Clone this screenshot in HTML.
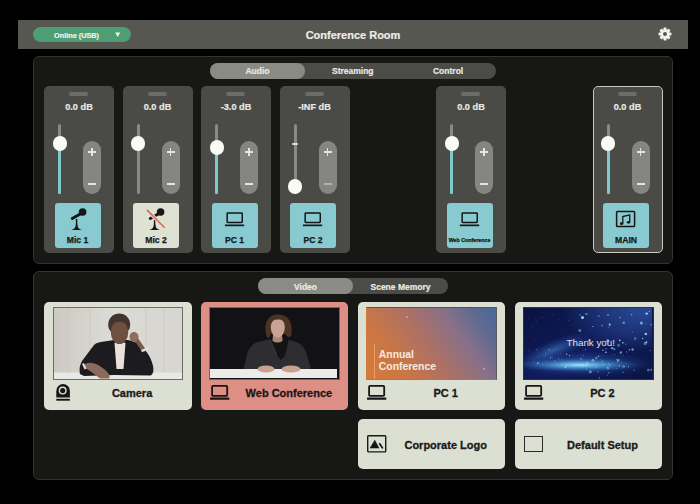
<!DOCTYPE html>
<html><head><meta charset="utf-8">
<style>
*{box-sizing:border-box;margin:0;padding:0}
html,body{width:700px;height:504px;background:#000;overflow:hidden;font-family:"Liberation Sans",sans-serif;font-weight:bold}
.a{position:absolute}
.panel{background:#171715;border:1px solid #343431;border-radius:6px}
.tabs{border-radius:8px;background:#4b4b47}
.tab{top:0;text-align:center;color:#e9e9e3;font-size:8.5px;width:95px;-webkit-text-stroke:.2px #e9e9e3}
.tab.on{background:#8b8b86;border-radius:8px}
.strip{top:86px;width:70px;height:167px;background:#4a4a46;border-radius:5px}
.ind{left:25px;top:6px;width:19px;height:4px;border-radius:2px;background:#6c6c68}
.db{left:0;top:15px;width:70px;text-align:center;color:#e9e9e3;font-size:9.2px;line-height:12px;-webkit-text-stroke:.2px #e9e9e3}
.trk{left:14px;top:37.5px;width:3px;height:70.5px;background:#8a8a85;border-radius:1.5px}
.teal{background:#7fc8cb}
.knob{left:8.5px;width:14.4px;height:14.4px;border-radius:50%;background:#fbfbf6}
.pm{left:39px;top:55px;width:18px;height:53px;border-radius:9px;background:#858581}
.btn{left:10.5px;top:116.5px;width:46px;height:45px;border-radius:3px;background:#88cad0}
.lbl{left:0;top:32px;width:46px;text-align:center;color:#181818;font-size:8.6px;line-height:11px;white-space:nowrap;-webkit-text-stroke:.25px #181818}
.card{width:147.5px;height:107.5px;border-radius:5px;background:#dbe0d2}
.card .img{left:8.5px;top:5px;width:130.5px;height:72.7px;overflow:hidden;border:1px solid #555}
.clbl{color:#1a1a1a;font-size:11px;line-height:14px;white-space:nowrap;-webkit-text-stroke:.3px #1a1a1a}
</style></head><body>

<div class="a" style="left:18px;top:20px;width:670px;height:29px;background:#575752"></div>
<div class="a" style="left:18px;top:20px;width:670px;height:29px;line-height:30px;text-align:center;color:#ecece6;font-size:11px;-webkit-text-stroke:.2px #ecece6">Conference Room</div>
<div class="a" style="left:33px;top:27px;width:98px;height:15px;border-radius:8px;background:#4f9d72;color:#eef3ee;font-size:7.3px;line-height:15px"><span class="a" style="left:21px;top:0.8px;-webkit-text-stroke:.2px #eef3ee">Online (USB)</span><svg class="a" style="left:81.6px;top:5px" width="6" height="6" viewBox="0 0 6 6"><path d="M0.2 0.5 H5.2 L2.7 5Z" fill="#eef3ee"/></svg></div>
<svg class="a" style="left:657.3px;top:26.4px" width="16" height="16" viewBox="-8.5 -8.5 17 17"><g fill="#f2f2ec"><rect x="-1.7" y="-6.8" width="3.4" height="3.6" rx=".9" transform="rotate(0)"/><rect x="-1.7" y="-6.8" width="3.4" height="3.6" rx=".9" transform="rotate(45)"/><rect x="-1.7" y="-6.8" width="3.4" height="3.6" rx=".9" transform="rotate(90)"/><rect x="-1.7" y="-6.8" width="3.4" height="3.6" rx=".9" transform="rotate(135)"/><rect x="-1.7" y="-6.8" width="3.4" height="3.6" rx=".9" transform="rotate(180)"/><rect x="-1.7" y="-6.8" width="3.4" height="3.6" rx=".9" transform="rotate(225)"/><rect x="-1.7" y="-6.8" width="3.4" height="3.6" rx=".9" transform="rotate(270)"/><rect x="-1.7" y="-6.8" width="3.4" height="3.6" rx=".9" transform="rotate(315)"/><circle r="4.6"/></g><circle r="2.1" fill="#575752"/></svg>
<div class="a panel" style="left:33px;top:56px;width:640px;height:208px"></div>
<div class="a tabs" style="left:210px;top:63px;width:286px;height:15.5px">
<div class="a tab on" style="left:0.0px;height:15.5px;line-height:17px">Audio</div>
<div class="a tab" style="left:95.3px;height:15.5px;line-height:17px">Streaming</div>
<div class="a tab" style="left:190.6px;height:15.5px;line-height:17px">Control</div>
</div>
<div class="a strip" style="left:44px"><div class="a" style="left:0px;top:0px;width:70px;height:167px"><div class="a ind"></div><div class="a db">0.0 dB</div><div class="a trk"></div><div class="a trk teal" style="top:57.5px;height:50.5px"></div><div class="a knob" style="top:50.3px"></div><div class="a pm"><div class="a" style="left:5px;top:10px;width:8px;height:1.5px;background:#e6e6e0"></div><div class="a" style="left:8.25px;top:6.75px;width:1.5px;height:8px;background:#e6e6e0"></div><div class="a" style="left:5px;top:42px;width:8px;height:1.5px;background:#e6e6e0"></div></div><div class="a btn" style="background:#88cad0"><svg class="a" style="left:0;top:0" width="46" height="30" viewBox="0 0 46 30"><circle cx="27.6" cy="9" r="3.8" fill="#161616"/><path d="M25.2 11 L17.3 15.5" stroke="#161616" stroke-width="3" stroke-linecap="round"/><path d="M21.6 16 V24" stroke="#161616" stroke-width="1.5"/><path d="M16.2 26.9 C19.5 26.4 20.8 24.4 20.9 21.5 L22.3 21.5 C22.4 24.4 23.7 26.4 27 26.9 Z" fill="#161616"/></svg><div class="a lbl">Mic 1</div></div></div></div>
<div class="a strip" style="left:122.5px"><div class="a" style="left:0px;top:0px;width:70px;height:167px"><div class="a ind"></div><div class="a db">0.0 dB</div><div class="a trk"></div><div class="a knob" style="top:50.3px"></div><div class="a pm"><div class="a" style="left:5px;top:10px;width:8px;height:1.5px;background:#e6e6e0"></div><div class="a" style="left:8.25px;top:6.75px;width:1.5px;height:8px;background:#e6e6e0"></div><div class="a" style="left:5px;top:42px;width:8px;height:1.5px;background:#e6e6e0"></div></div><div class="a btn" style="background:#dee2d3"><svg class="a" style="left:0;top:0" width="46" height="30" viewBox="0 0 46 30"><circle cx="27.6" cy="9" r="3.8" fill="#161616"/><path d="M25.2 11 L17.3 15.5" stroke="#161616" stroke-width="3" stroke-linecap="round"/><path d="M21.6 16 V24" stroke="#161616" stroke-width="1.5"/><path d="M16.2 26.9 C19.5 26.4 20.8 24.4 20.9 21.5 L22.3 21.5 C22.4 24.4 23.7 26.4 27 26.9 Z" fill="#161616"/><path d="M13.9 6.9 L31.7 24.8" stroke="#dee2d3" stroke-width="3.6"/><path d="M13.9 6.9 L31.7 24.8" stroke="#e0605a" stroke-width="1.5"/></svg><div class="a lbl">Mic 2</div></div></div></div>
<div class="a strip" style="left:201px"><div class="a" style="left:0px;top:0px;width:70px;height:167px"><div class="a ind"></div><div class="a db">-3.0 dB</div><div class="a trk"></div><div class="a trk teal" style="top:61.5px;height:46.5px"></div><div class="a knob" style="top:54.3px"></div><div class="a pm"><div class="a" style="left:5px;top:10px;width:8px;height:1.5px;background:#e6e6e0"></div><div class="a" style="left:8.25px;top:6.75px;width:1.5px;height:8px;background:#e6e6e0"></div><div class="a" style="left:5px;top:42px;width:8px;height:1.5px;background:#e6e6e0"></div></div><div class="a btn" style="background:#88cad0"><svg class="a" style="left:0;top:0" width="46" height="30" viewBox="0 0 46 30"><rect x="15.15" y="10.1" width="15.1" height="9.3" rx=".7" fill="none" stroke="#161616" stroke-width="1.5"/><rect x="12.9" y="21.5" width="19.3" height="1.7" fill="#161616"/></svg><div class="a lbl">PC 1</div></div></div></div>
<div class="a strip" style="left:279.5px"><div class="a" style="left:0px;top:0px;width:70px;height:167px"><div class="a ind"></div><div class="a db">-INF dB</div><div class="a trk"></div><div class="a" style="left:12.5px;top:57px;width:6px;height:2px;background:#e0e0da;border-radius:1px"></div><div class="a knob" style="top:93.3px"></div><div class="a pm"><div class="a" style="left:5px;top:10px;width:8px;height:1.5px;background:#e6e6e0"></div><div class="a" style="left:8.25px;top:6.75px;width:1.5px;height:8px;background:#e6e6e0"></div><div class="a" style="left:5px;top:42px;width:8px;height:1.5px;background:#e6e6e0;opacity:.45"></div></div><div class="a btn" style="background:#88cad0"><svg class="a" style="left:0;top:0" width="46" height="30" viewBox="0 0 46 30"><rect x="15.15" y="10.1" width="15.1" height="9.3" rx=".7" fill="none" stroke="#161616" stroke-width="1.5"/><rect x="12.9" y="21.5" width="19.3" height="1.7" fill="#161616"/></svg><div class="a lbl">PC 2</div></div></div></div>
<div class="a strip" style="left:436px"><div class="a" style="left:0px;top:0px;width:70px;height:167px"><div class="a ind"></div><div class="a db">0.0 dB</div><div class="a trk"></div><div class="a trk teal" style="top:57.5px;height:50.5px"></div><div class="a knob" style="top:50.3px"></div><div class="a pm"><div class="a" style="left:5px;top:10px;width:8px;height:1.5px;background:#e6e6e0"></div><div class="a" style="left:8.25px;top:6.75px;width:1.5px;height:8px;background:#e6e6e0"></div><div class="a" style="left:5px;top:42px;width:8px;height:1.5px;background:#e6e6e0"></div></div><div class="a btn" style="background:#88cad0"><svg class="a" style="left:0;top:0" width="46" height="30" viewBox="0 0 46 30"><rect x="15.15" y="10.1" width="15.1" height="9.3" rx=".7" fill="none" stroke="#161616" stroke-width="1.5"/><rect x="12.9" y="21.5" width="19.3" height="1.7" fill="#161616"/></svg><div class="a lbl" style="font-size:5.3px;top:32px;left:-1px;width:48px">Web Conference</div></div></div></div>
<div class="a strip" style="left:592.5px;border:1px solid #c9c9c1"><div class="a" style="left:-1px;top:-1px;width:70px;height:167px"><div class="a ind"></div><div class="a db">0.0 dB</div><div class="a trk"></div><div class="a trk teal" style="top:57.5px;height:50.5px"></div><div class="a knob" style="top:50.3px"></div><div class="a pm"><div class="a" style="left:5px;top:10px;width:8px;height:1.5px;background:#e6e6e0"></div><div class="a" style="left:8.25px;top:6.75px;width:1.5px;height:8px;background:#e6e6e0"></div><div class="a" style="left:5px;top:42px;width:8px;height:1.5px;background:#e6e6e0"></div></div><div class="a btn" style="background:#88cad0"><svg class="a" style="left:0;top:0" width="46" height="30" viewBox="0 0 46 30"><rect x="13.6" y="8.6" width="18" height="15" rx=".8" fill="none" stroke="#161616" stroke-width="1.5"/><path d="M19.8 20.5 V13.6 L26.7 11.8 V19" fill="none" stroke="#161616" stroke-width="1.3"/><ellipse cx="18.6" cy="20.7" rx="1.7" ry="1.4" fill="#161616"/><ellipse cx="25.5" cy="19.3" rx="1.7" ry="1.4" fill="#161616"/></svg><div class="a lbl">MAIN</div></div></div></div>
<div class="a panel" style="left:33px;top:271px;width:640px;height:209px"></div>
<div class="a tabs" style="left:258px;top:278px;width:190px;height:16px">
<div class="a tab on" style="left:0px;height:16px;line-height:18.5px">Video</div>
<div class="a tab" style="left:95px;height:16px;line-height:18.5px">Scene Memory</div>
</div>
<div class="a card" style="left:44.1px;top:302px">
  <div class="a img" style="border-color:#6d6d68;background:#cdcac4">
    <svg class="a" style="left:0;top:0" width="128" height="71" viewBox="0 0 128 71">
      <defs><linearGradient id="wood" x1="0" x2="1"><stop offset="0" stop-color="#cdcac4"/><stop offset=".45" stop-color="#dddbd5"/><stop offset="1" stop-color="#d7d5cf"/></linearGradient></defs>
      <rect width="128" height="71" fill="url(#wood)"/>
      <g stroke="#c0bcb6" stroke-width=".7" opacity=".6"><path d="M14 0V64M36 0V64M92 0V64M110 0V64"/></g>
      <rect y="64.5" width="128" height="7" fill="#e9e8e4"/>
      <path d="M26 66 C25 60 26 57 28 53 L40 37 C42 35 44 34.5 47 34 L60 32 L74 32 C78 33 82 34 85 36 L90 41 C94 45 98 52 99 58 C100 63 99 67 96 67.5 L60 67 L30 68 Z" fill="#1b1b20"/>
      <path d="M60.5 35 L65.5 33 L71.5 35 L69.5 61 L62.5 61 Z" fill="#ebe1da"/>
      <ellipse cx="65.2" cy="16.5" rx="11" ry="11" fill="#433530"/>
      <ellipse cx="65.5" cy="24.5" rx="8.7" ry="11.5" fill="#6e5040"/>
      <path d="M55.5 19 C56 11 60 8 65.5 8 C71 8 75 11 75.5 19 C73 15 70 14 65.5 14 C61 14 58 15 55.5 19 Z" fill="#433530"/>
      <path d="M89.5 42 L82 31" stroke="#7a5c4c" stroke-width="4.2" stroke-linecap="round"/>
      <ellipse cx="80" cy="29" rx="4.5" ry="5" fill="#8c6e5e"/>
      <path d="M87.5 43 L93.5 40.5" stroke="#e9e4de" stroke-width="2"/>
      <path d="M31 56 C37 53 44 56 50 61 C54 64 57 68 55 70.5 L46 70.5 C40 66 35 62 31 60 Z" fill="#8a6a5a"/><path d="M29 55.5 L31.5 61" stroke="#e8e2dc" stroke-width="2"/>
    </svg>
  </div>
  <svg class="a" style="left:12px;top:82px" width="15" height="18" viewBox="0 0 15 18"><path d="M0.3 13.4 V6.9 A6.8 6.8 0 0 1 13.9 6.9 V13.4Z" fill="#161616"/><circle cx="6.7" cy="6.6" r="3.3" fill="none" stroke="#dbe0d2" stroke-width="1.4"/><rect x="0.3" y="14.8" width="13.6" height="1.9" fill="#161616"/></svg>
  <div class="a clbl" style="left:28px;top:83.6px;width:120px;text-align:center">Camera</div>
</div>
<div class="a card" style="left:200.9px;top:302px;background:#dd8e85">
  <div class="a img" style="border:1.8px solid #dc3a28;background:#111115">
    <svg class="a" style="left:0;top:0" width="127" height="70" viewBox="0 0 127 70">
      <rect width="127" height="70" fill="#111116"/>
      <rect y="61" width="127" height="10" fill="#ebebea"/>
      <path d="M33.5 61 L37 46.5 C39 39.5 43 35.5 48 34 L61 31 L77 31 L86 34 C91 35.5 94.5 39.5 96.5 45.5 L101 61 Z" fill="#2e2e32"/><path d="M61.5 31.5 L67 48 M77.5 31.5 L72 48" stroke="#47474c" stroke-width="1.1"/>
      <path d="M60 30 L66 44 L71 38 L76 44 L79 30 Z" fill="#151517"/>
      <path d="M62 30 L67 48 L71 52 L75 48 L78 30 Q71 36 62 30 Z" fill="#141416"/>
      <path d="M63 26 L72 26 L72.5 33 Q67.5 36 62.5 33 Z" fill="#b08575"/>
      <path d="M57 29 C53 17 57 6.5 68 6.5 C79 6.5 83 15 81.5 27 C80 30 77 30 75.5 26 L60.5 26 C60 30 58 31 57 29 Z" fill="#4e3222"/>
      <ellipse cx="67.8" cy="19.5" rx="7" ry="9.8" fill="#c8a292"/>
      <path d="M60 16 C60 9 63.5 8.5 68 8.5 C72.5 8.5 76 10 75.5 16 C73.5 12 70.5 11.5 67.5 11.5 C64 11.5 61.5 13 60 16 Z" fill="#4e3222"/>
      <ellipse cx="56" cy="61" rx="8.5" ry="3.6" fill="#c9a191"/>
      <ellipse cx="81" cy="61" rx="9.5" ry="3.6" fill="#c9a191"/>
    </svg>
  </div>
  <svg class="a" style="left:9px;top:83px" width="20" height="16" viewBox="0 0 20 16"><rect x="2.1" y="0.9" width="15.1" height="9.9" rx=".9" fill="none" stroke="#1c1414" stroke-width="1.8"/><rect x="0" y="12.6" width="19.3" height="2.1" rx=".5" fill="#1c1414"/></svg>
  <div class="a clbl" style="left:28px;top:83.6px;width:120px;text-align:center;color:#1c1414">Web Conference</div>
</div>
<div class="a card" style="left:357.7px;top:302px">
  <div class="a img" style="border-color:#5a5050 #5a5a60 #c07040 #d07a40;background:linear-gradient(55deg,#d97a36 0%,#c97646 25%,#a97068 50%,#86708a 70%,#5e6a90 86%,#48689a 100%)">
    <div class="a" style="left:6.8px;top:36px;width:1px;height:38px;background:#e6a676;opacity:.85"></div>
    <div class="a" style="left:11.6px;top:41px;color:#f3ebe3;font-size:10.4px;line-height:12px;white-space:nowrap">Annual<br>Conference</div>
    <div class="a" style="left:39px;top:8px;width:2px;height:2px;border-radius:50%;background:#f0c0a0;opacity:.6"></div>
    <div class="a" style="left:116px;top:60px;width:2px;height:2px;border-radius:50%;background:#f0c0c0;opacity:.6"></div>
  </div>
  <svg class="a" style="left:9px;top:83px" width="20" height="16" viewBox="0 0 20 16"><rect x="2.1" y="0.9" width="15.1" height="9.9" rx=".9" fill="none" stroke="#161616" stroke-width="1.8"/><rect x="0" y="12.6" width="19.3" height="2.1" rx=".5" fill="#161616"/></svg>
  <div class="a clbl" style="left:28px;top:83.6px;width:120px;text-align:center">PC 1</div>
</div>
<div class="a card" style="left:514.5px;top:302px">
  <div class="a img" style="border-color:#2a3050;background:#0c1648">
    <svg class="a" style="left:0;top:0" width="128" height="71" viewBox="0 0 128 71">
      <defs>
        <linearGradient id="bg2" x1="0" y1="0" x2="1" y2="1"><stop offset="0" stop-color="#0a1240"/><stop offset=".55" stop-color="#101c5c"/><stop offset="1" stop-color="#0a1442"/></linearGradient>
        <radialGradient id="beam" cx=".9" cy="0" r=".6"><stop offset="0" stop-color="#3a68c0" stop-opacity=".6"/><stop offset="1" stop-color="#4878d0" stop-opacity="0"/></radialGradient>
        <radialGradient id="band" cx=".5" cy=".5" r=".5"><stop offset="0" stop-color="#a0e8ff" stop-opacity="1"/><stop offset=".45" stop-color="#5ab0e8" stop-opacity=".6"/><stop offset="1" stop-color="#2a60c0" stop-opacity="0"/></radialGradient>
        <radialGradient id="band2" cx=".5" cy=".5" r=".5"><stop offset="0" stop-color="#4a98e0" stop-opacity=".55"/><stop offset="1" stop-color="#2a60c0" stop-opacity="0"/></radialGradient>
      </defs>
      <rect width="128" height="71" fill="url(#bg2)"/>
      <rect width="128" height="71" fill="url(#beam)"/>
      <ellipse cx="30" cy="42" rx="40" ry="10" fill="url(#band2)" transform="rotate(-22 30 42)"/>
      <ellipse cx="60" cy="56" rx="72" ry="13" fill="url(#band2)"/>
      <ellipse cx="55" cy="57" rx="64" ry="7" fill="url(#band)"/>
      <circle cx="88.0" cy="40.1" r="1.2" fill="#a8e4fa" opacity="0.62"/><circle cx="117.4" cy="14.9" r="1.5" fill="#a8e4fa" opacity="0.64"/><circle cx="99.8" cy="14.7" r="1.2" fill="#a8e4fa" opacity="0.53"/><circle cx="61.6" cy="57.1" r="0.6" fill="#a8e4fa" opacity="0.71"/><circle cx="83.9" cy="32.8" r="1.5" fill="#a8e4fa" opacity="0.74"/><circle cx="100.5" cy="58.6" r="0.6" fill="#a8e4fa" opacity="0.39"/><circle cx="68.9" cy="18.5" r="0.6" fill="#a8e4fa" opacity="0.82"/><circle cx="78.8" cy="42.2" r="0.8" fill="#a8e4fa" opacity="0.66"/><circle cx="101.7" cy="36.0" r="0.6" fill="#a8e4fa" opacity="0.62"/><circle cx="75.3" cy="69.8" r="0.6" fill="#a8e4fa" opacity="0.77"/><circle cx="78.0" cy="17.6" r="1.0" fill="#a8e4fa" opacity="0.37"/><circle cx="96.1" cy="9.3" r="0.6" fill="#a8e4fa" opacity="0.86"/><circle cx="83.2" cy="67.1" r="0.6" fill="#a8e4fa" opacity="0.48"/><circle cx="122.7" cy="5.6" r="1.2" fill="#a8e4fa" opacity="0.94"/><circle cx="84.0" cy="7.0" r="0.8" fill="#a8e4fa" opacity="0.82"/><circle cx="74.7" cy="7.9" r="1.0" fill="#a8e4fa" opacity="0.36"/><circle cx="84.9" cy="64.8" r="0.8" fill="#a8e4fa" opacity="0.50"/><circle cx="62.4" cy="6.1" r="1.2" fill="#a8e4fa" opacity="0.46"/><circle cx="95.8" cy="32.4" r="0.8" fill="#a8e4fa" opacity="0.94"/><circle cx="111.2" cy="30.5" r="1.2" fill="#a8e4fa" opacity="0.42"/><circle cx="85.7" cy="16.5" r="1.0" fill="#a8e4fa" opacity="0.87"/><circle cx="126.2" cy="42.3" r="0.6" fill="#a8e4fa" opacity="0.48"/><circle cx="83.8" cy="60.1" r="1.5" fill="#a8e4fa" opacity="0.41"/><circle cx="127.2" cy="16.5" r="1.0" fill="#a8e4fa" opacity="0.36"/><circle cx="99.6" cy="58.5" r="1.2" fill="#a8e4fa" opacity="0.39"/><circle cx="61.6" cy="41.6" r="0.8" fill="#a8e4fa" opacity="0.36"/><circle cx="81.9" cy="44.3" r="0.8" fill="#a8e4fa" opacity="0.93"/><circle cx="90.3" cy="41.1" r="1.2" fill="#a8e4fa" opacity="0.46"/><circle cx="66.3" cy="63.8" r="1.5" fill="#a8e4fa" opacity="0.50"/><circle cx="68.9" cy="52.3" r="1.5" fill="#a8e4fa" opacity="0.47"/><circle cx="124.4" cy="62.0" r="1.5" fill="#a8e4fa" opacity="0.40"/><circle cx="58.5" cy="9.4" r="1.5" fill="#a8e4fa" opacity="0.93"/><circle cx="72.4" cy="49.9" r="1.0" fill="#a8e4fa" opacity="0.60"/><circle cx="121.1" cy="35.4" r="1.5" fill="#a8e4fa" opacity="0.46"/><circle cx="107.6" cy="6.7" r="0.8" fill="#a8e4fa" opacity="0.64"/><circle cx="102.7" cy="43.9" r="0.6" fill="#a8e4fa" opacity="0.52"/><circle cx="122.0" cy="15.9" r="0.6" fill="#a8e4fa" opacity="0.39"/><circle cx="85.0" cy="18.9" r="0.6" fill="#a8e4fa" opacity="0.46"/><circle cx="81.9" cy="40.9" r="0.8" fill="#a8e4fa" opacity="0.41"/><circle cx="65.1" cy="32.6" r="1.0" fill="#a8e4fa" opacity="0.74"/><circle cx="105.5" cy="41.7" r="0.8" fill="#a8e4fa" opacity="0.70"/><circle cx="122.4" cy="34.3" r="1.0" fill="#a8e4fa" opacity="0.77"/><circle cx="125.3" cy="3.4" r="0.6" fill="#a8e4fa" opacity="0.64"/><circle cx="108.3" cy="23.7" r="0.6" fill="#a8e4fa" opacity="0.40"/><circle cx="94.9" cy="52.1" r="0.8" fill="#a8e4fa" opacity="0.83"/><circle cx="121.8" cy="25.9" r="1.2" fill="#a8e4fa" opacity="0.89"/><circle cx="118.6" cy="30.4" r="0.6" fill="#a8e4fa" opacity="0.87"/><circle cx="96.8" cy="44.5" r="1.2" fill="#a8e4fa" opacity="0.58"/><circle cx="55.9" cy="6.9" r="0.6" fill="#a8e4fa" opacity="0.73"/><circle cx="127.5" cy="61.8" r="1.0" fill="#a8e4fa" opacity="0.58"/><circle cx="108.7" cy="41.5" r="1.2" fill="#a8e4fa" opacity="0.63"/><circle cx="94.5" cy="37.3" r="1.5" fill="#a8e4fa" opacity="0.37"/><circle cx="98.9" cy="34.7" r="0.8" fill="#a8e4fa" opacity="0.92"/><circle cx="63.2" cy="55.0" r="1.2" fill="#a8e4fa" opacity="0.50"/><circle cx="55.8" cy="22.5" r="1.5" fill="#a8e4fa" opacity="0.47"/><circle cx="18.7" cy="56.2" r="0.5" fill="#c0f0ff" opacity="0.55"/><circle cx="26.6" cy="49.2" r="0.5" fill="#c0f0ff" opacity="0.63"/><circle cx="21.8" cy="45.2" r="0.4" fill="#c0f0ff" opacity="0.74"/><circle cx="42.3" cy="57.9" r="0.7" fill="#c0f0ff" opacity="0.76"/><circle cx="23.1" cy="54.4" r="0.4" fill="#c0f0ff" opacity="0.66"/><circle cx="104.5" cy="58.8" r="0.5" fill="#c0f0ff" opacity="0.71"/><circle cx="12.4" cy="41.4" r="0.5" fill="#c0f0ff" opacity="0.49"/><circle cx="57.2" cy="57.6" r="0.7" fill="#c0f0ff" opacity="0.46"/><circle cx="92.3" cy="60.4" r="0.4" fill="#c0f0ff" opacity="0.71"/><circle cx="30.6" cy="52.6" r="0.7" fill="#c0f0ff" opacity="0.32"/><circle cx="77.9" cy="52.9" r="0.7" fill="#c0f0ff" opacity="0.31"/><circle cx="14.9" cy="49.3" r="0.5" fill="#c0f0ff" opacity="0.39"/><circle cx="84.6" cy="55.3" r="0.4" fill="#c0f0ff" opacity="0.79"/><circle cx="12.7" cy="57.3" r="0.4" fill="#c0f0ff" opacity="0.61"/><circle cx="72.1" cy="59.6" r="0.7" fill="#c0f0ff" opacity="0.40"/><circle cx="90.6" cy="46.6" r="0.5" fill="#c0f0ff" opacity="0.39"/><circle cx="1.2" cy="42.4" r="0.4" fill="#c0f0ff" opacity="0.41"/><circle cx="85.6" cy="57.1" r="0.7" fill="#c0f0ff" opacity="0.65"/><circle cx="57.2" cy="50.9" r="0.5" fill="#c0f0ff" opacity="0.72"/><circle cx="77.0" cy="51.6" r="0.4" fill="#c0f0ff" opacity="0.34"/><circle cx="102.6" cy="55.6" r="0.5" fill="#c0f0ff" opacity="0.40"/><circle cx="97.6" cy="53.9" r="0.4" fill="#c0f0ff" opacity="0.49"/><circle cx="62.6" cy="61.2" r="0.5" fill="#c0f0ff" opacity="0.53"/><circle cx="71.6" cy="51.1" r="0.4" fill="#c0f0ff" opacity="0.35"/><circle cx="95.3" cy="58.7" r="0.4" fill="#c0f0ff" opacity="0.41"/><circle cx="99.0" cy="47.3" r="0.4" fill="#c0f0ff" opacity="0.79"/><circle cx="59.1" cy="56.9" r="0.7" fill="#c0f0ff" opacity="0.73"/><circle cx="38.3" cy="50.8" r="0.4" fill="#c0f0ff" opacity="0.32"/><circle cx="37.6" cy="51.3" r="0.4" fill="#c0f0ff" opacity="0.41"/><circle cx="95.4" cy="57.5" r="0.5" fill="#c0f0ff" opacity="0.70"/><circle cx="19.0" cy="47.8" r="0.4" fill="#c0f0ff" opacity="0.54"/><circle cx="110.0" cy="62.1" r="0.7" fill="#c0f0ff" opacity="0.56"/><circle cx="74.6" cy="48.3" r="0.7" fill="#c0f0ff" opacity="0.77"/><circle cx="9.5" cy="52.9" r="0.4" fill="#c0f0ff" opacity="0.52"/><circle cx="61.5" cy="58.5" r="0.4" fill="#c0f0ff" opacity="0.56"/><circle cx="92.8" cy="51.5" r="0.7" fill="#c0f0ff" opacity="0.43"/><circle cx="73.8" cy="63.8" r="0.7" fill="#c0f0ff" opacity="0.40"/><circle cx="93.6" cy="53.7" r="0.7" fill="#c0f0ff" opacity="0.56"/><circle cx="63.0" cy="57.5" r="0.7" fill="#c0f0ff" opacity="0.30"/><circle cx="41.5" cy="59.4" r="0.7" fill="#c0f0ff" opacity="0.78"/><circle cx="56.8" cy="50.2" r="0.7" fill="#c0f0ff" opacity="0.36"/><circle cx="10.3" cy="54.2" r="0.4" fill="#c0f0ff" opacity="0.33"/><circle cx="59.3" cy="47.4" r="0.5" fill="#c0f0ff" opacity="0.43"/><circle cx="52.0" cy="61.2" r="0.4" fill="#c0f0ff" opacity="0.47"/><circle cx="99.1" cy="64.3" r="0.7" fill="#c0f0ff" opacity="0.46"/><circle cx="21.1" cy="48.1" r="0.7" fill="#c0f0ff" opacity="0.31"/><circle cx="28.6" cy="49.5" r="0.4" fill="#c0f0ff" opacity="0.40"/><circle cx="25.0" cy="41.7" r="0.7" fill="#c0f0ff" opacity="0.44"/><circle cx="79.6" cy="56.2" r="0.5" fill="#c0f0ff" opacity="0.67"/><circle cx="13.5" cy="55.2" r="0.7" fill="#c0f0ff" opacity="0.61"/><circle cx="78.9" cy="53.5" r="0.4" fill="#c0f0ff" opacity="0.49"/><circle cx="45.5" cy="47.5" r="0.7" fill="#c0f0ff" opacity="0.61"/><circle cx="59.2" cy="59.2" r="0.4" fill="#c0f0ff" opacity="0.56"/><circle cx="93.6" cy="52.3" r="0.7" fill="#c0f0ff" opacity="0.59"/><circle cx="15.0" cy="55.6" r="0.5" fill="#c0f0ff" opacity="0.75"/><circle cx="34.7" cy="50.8" r="0.5" fill="#c0f0ff" opacity="0.75"/><circle cx="21.4" cy="52.2" r="0.4" fill="#c0f0ff" opacity="0.37"/><circle cx="26.3" cy="49.9" r="0.7" fill="#c0f0ff" opacity="0.34"/><circle cx="42.7" cy="46.2" r="0.7" fill="#c0f0ff" opacity="0.69"/><circle cx="13.9" cy="54.4" r="0.5" fill="#c0f0ff" opacity="0.61"/><circle cx="47.9" cy="9.3" r="0.5" fill="#6090d0" opacity="0.37"/><circle cx="21.5" cy="41.9" r="0.5" fill="#6090d0" opacity="0.31"/><circle cx="42.3" cy="33.6" r="0.5" fill="#6090d0" opacity="0.30"/><circle cx="59.9" cy="42.5" r="0.5" fill="#6090d0" opacity="0.44"/><circle cx="28.9" cy="6.1" r="0.5" fill="#6090d0" opacity="0.43"/><circle cx="36.8" cy="45.7" r="0.5" fill="#6090d0" opacity="0.34"/><circle cx="11.4" cy="10.2" r="0.5" fill="#6090d0" opacity="0.25"/><circle cx="9.5" cy="17.7" r="0.5" fill="#6090d0" opacity="0.40"/><circle cx="34.8" cy="11.1" r="0.5" fill="#6090d0" opacity="0.40"/><circle cx="4.7" cy="9.4" r="0.5" fill="#6090d0" opacity="0.32"/><circle cx="25.6" cy="21.0" r="0.5" fill="#6090d0" opacity="0.26"/><circle cx="22.4" cy="33.5" r="0.5" fill="#6090d0" opacity="0.21"/><circle cx="12.0" cy="23.4" r="0.5" fill="#6090d0" opacity="0.31"/><circle cx="22.2" cy="46.5" r="0.5" fill="#6090d0" opacity="0.38"/><circle cx="5.7" cy="40.7" r="0.5" fill="#6090d0" opacity="0.30"/><circle cx="5.1" cy="42.9" r="0.5" fill="#6090d0" opacity="0.46"/><circle cx="54.5" cy="47.3" r="0.5" fill="#6090d0" opacity="0.37"/><circle cx="11.5" cy="31.3" r="0.5" fill="#6090d0" opacity="0.30"/><circle cx="45.7" cy="17.6" r="0.5" fill="#6090d0" opacity="0.23"/><circle cx="44.6" cy="12.2" r="0.5" fill="#6090d0" opacity="0.48"/><circle cx="8.0" cy="19.8" r="0.5" fill="#6090d0" opacity="0.36"/><circle cx="22.2" cy="24.4" r="0.5" fill="#6090d0" opacity="0.25"/><circle cx="12.4" cy="13.3" r="0.5" fill="#6090d0" opacity="0.44"/><circle cx="18.1" cy="9.5" r="0.5" fill="#6090d0" opacity="0.47"/><circle cx="59.4" cy="45.6" r="0.5" fill="#6090d0" opacity="0.21"/>
    </svg>
    <div class="a" style="left:42.5px;top:29px;color:#dde2ee;font-size:9.8px;font-weight:normal;line-height:12px;white-space:nowrap">Thank you!</div>
  </div>
  <svg class="a" style="left:9px;top:83px" width="20" height="16" viewBox="0 0 20 16"><rect x="2.1" y="0.9" width="15.1" height="9.9" rx=".9" fill="none" stroke="#161616" stroke-width="1.8"/><rect x="0" y="12.6" width="19.3" height="2.1" rx=".5" fill="#161616"/></svg>
  <div class="a clbl" style="left:28px;top:83.6px;width:120px;text-align:center">PC 2</div>
</div>
<div class="a card" style="left:357.7px;top:419.4px;height:49.6px">
  <svg class="a" style="left:9px;top:16px" width="20" height="18" viewBox="0 0 20 18"><rect x="0.7" y="0.7" width="18" height="16.2" rx=".8" fill="none" stroke="#1a1a1a" stroke-width="1.4"/><path d="M3 13.1 L7.8 5.2 L12 13.1Z" fill="#161616" stroke="#161616" stroke-width=".5" stroke-linejoin="round"/><path d="M12.7 8.8 L15.4 12.9" stroke="#161616" stroke-width="1.7" stroke-linecap="round"/></svg>
  <div class="a clbl" style="left:28px;top:19px;width:120px;text-align:center">Corporate Logo</div>
</div>
<div class="a card" style="left:514.5px;top:419.4px;height:49.6px">
  <div class="a" style="left:9px;top:16.5px;width:19.2px;height:16.5px;border:1.6px solid #2a2a2a"></div>
  <div class="a clbl" style="left:28px;top:19px;width:120px;text-align:center">Default Setup</div>
</div>
</body></html>
